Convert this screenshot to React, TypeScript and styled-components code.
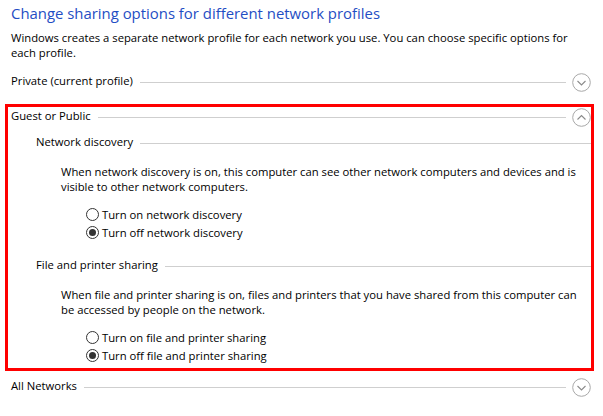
import React from "react";
import styled, { createGlobalStyle } from "styled-components";

const Global = createGlobalStyle`
  html, body { margin: 0; padding: 0; background: #ffffff; }
  body { font-family: "Open Sans", "Noto Sans", "Liberation Sans", sans-serif; color: #000; }
  * { box-sizing: border-box; }
`;

const Page = styled.div`
  width: 603px;
  height: 416px;
  padding: 2px 12px 0 11px;
  display: flex;
  flex-direction: column;
  overflow: hidden;
`;

const Title = styled.h1`
  margin: 0;
  font-weight: 400;
  font-size: 14.9px;
  line-height: 22px;
  color: #1f4ec4;
  white-space: nowrap;
`;

const Body = styled.p<{ $indent?: number; $mt?: number }>`
  margin: ${(p) => p.$mt ?? 0}px 0 0 ${(p) => p.$indent ?? 0}px;
  font-size: 11.27px;
  line-height: 15px;
  white-space: nowrap;
  color: #000;
`;

const HeaderRow = styled.div<{ $indent?: number; $mt?: number }>`
  display: flex;
  align-items: center;
  height: 20px;
  margin-top: ${(p) => p.$mt ?? 0}px;
  padding-left: ${(p) => p.$indent ?? 0}px;
`;

const HeaderText = styled.span`
  font-size: 11.27px;
  line-height: 20px;
  white-space: nowrap;
  margin-top: -3px;
`;

const Rule = styled.div<{ $flush?: boolean }>`
  flex: 1;
  height: 1px;
  background: #cfcfcf;
  margin: 0 ${(p) => (p.$flush ? 0 : 6)}px 0 7px;
`;

const Highlight = styled.section`
  margin: 12px -3px 0 -6px;
  padding: 0 0 4px 3px;
  border: 3px solid #ff0000;
  display: flex;
  flex-direction: column;
`;

const Section = styled.div<{ $mt: number }>`
  display: flex;
  flex-direction: column;
  margin-top: ${(p) => p.$mt}px;
`;

const RadioGroup = styled.div`
  display: flex;
  flex-direction: column;
  margin: 11px 0 0 75px;
`;

const RadioRow = styled.label`
  display: flex;
  align-items: center;
  height: 18px;
  gap: 3px;
  font-size: 11.27px;
  white-space: nowrap;
`;

const RadioCircle = styled.span<{ $checked?: boolean }>`
  width: 13px;
  height: 13px;
  border-radius: 50%;
  border: 1px solid #333333;
  background: #fff;
  display: inline-flex;
  align-items: center;
  justify-content: center;
  flex: none;
  &::after {
    content: "";
    width: 7px;
    height: 7px;
    border-radius: 50%;
    background: ${(p) => (p.$checked ? "#333333" : "transparent")};
  }
`;

const Chevron = ({ up }: { up?: boolean }) => (
  <svg width="19" height="19" viewBox="0 0 19 19" style={{ flex: "none" }}>
    <circle cx="9.5" cy="9.5" r="8.8" fill="none" stroke="#a8a8a8" strokeWidth="1" />
    {up ? (
      <polyline points="5.5,11.5 9.5,7.5 13.5,11.5" fill="none" stroke="#8a8a8a" strokeWidth="1.1" />
    ) : (
      <polyline points="5.5,8 9.5,12 13.5,8" fill="none" stroke="#8a8a8a" strokeWidth="1.1" />
    )}
  </svg>
);

const Radio = ({ checked, children }: { checked?: boolean; children: React.ReactNode }) => (
  <RadioRow>
    <RadioCircle $checked={checked} />
    <span>{children}</span>
  </RadioRow>
);

export default function App() {
  return (
    <>
      <Global />
      <Page>
        <Title>Change sharing options for different network profiles</Title>
        <Body $mt={6}>
          Windows creates a separate network profile for each network you use. You can choose specific options for
          <br />
          each profile.
        </Body>
        <HeaderRow $mt={12}>
          <HeaderText>Private (current profile)</HeaderText>
          <Rule />
          <Chevron />
        </HeaderRow>
        <Highlight>
          <HeaderRow>
            <HeaderText>Guest or Public</HeaderText>
            <Rule />
            <Chevron up />
          </HeaderRow>
          <Section $mt={6}>
            <HeaderRow $indent={25}>
              <HeaderText>Network discovery</HeaderText>
              <Rule $flush />
            </HeaderRow>
            <Body $indent={50} $mt={11}>
              When network discovery is on, this computer can see other network computers and devices and is
              <br />
              visible to other network computers.
            </Body>
            <RadioGroup>
              <Radio>Turn on network discovery</Radio>
              <Radio checked>Turn off network discovery</Radio>
            </RadioGroup>
          </Section>
          <Section $mt={15}>
            <HeaderRow $indent={25}>
              <HeaderText>File and printer sharing</HeaderText>
              <Rule $flush />
            </HeaderRow>
            <Body $indent={50} $mt={11}>
              When file and printer sharing is on, files and printers that you have shared from this computer can
              <br />
              be accessed by people on the network.
            </Body>
            <RadioGroup>
              <Radio>Turn on file and printer sharing</Radio>
              <Radio checked>Turn off file and printer sharing</Radio>
            </RadioGroup>
          </Section>
        </Highlight>
        <HeaderRow $mt={6}>
          <HeaderText>All Networks</HeaderText>
          <Rule />
          <Chevron />
        </HeaderRow>
      </Page>
    </>
  );
}
